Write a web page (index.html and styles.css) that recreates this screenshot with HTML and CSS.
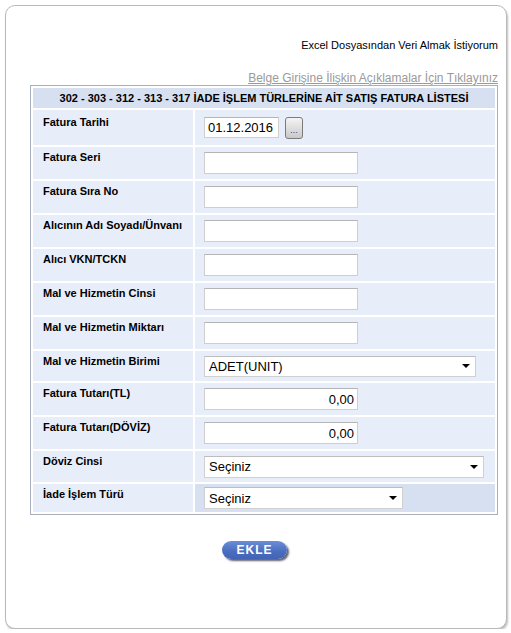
FILE: index.html
```html
<!DOCTYPE html>
<html lang="tr">
<head>
<meta charset="utf-8">
<title>İade Satış Fatura Listesi</title>
<link rel="stylesheet" href="styles.css">
</head>
<body>
<div class="card">
  <div class="top-links">
    <div class="excel">Excel Dosyasından Veri Almak İstiyorum</div>
    <a class="help" href="#">Belge Girişine İlişkin Açıklamalar İçin Tıklayınız</a>
  </div>
  <div class="table-wrap">
    <table class="form-table">
      <colgroup><col class="c-lbl"><col class="c-val"></colgroup>
      <tr class="head"><th colspan="2">302 - 303 - 312 - 313 - 317 İADE İŞLEM TÜRLERİNE AİT SATIŞ FATURA LİSTESİ</th></tr>
      <tr class="h35"><td class="lbl first">Fatura Tarihi</td><td class="val"><div class="date-row"><input class="inp date" type="text" value="01.12.2016"><button class="dots" type="button">...</button></div></td></tr>
      <tr class="h32"><td class="lbl">Fatura Seri</td><td class="val"><input class="inp txt" type="text"></td></tr>
      <tr class="h32"><td class="lbl">Fatura Sıra No</td><td class="val"><input class="inp txt" type="text"></td></tr>
      <tr class="h32"><td class="lbl">Alıcının Adı Soyadı/Ünvanı</td><td class="val"><input class="inp txt" type="text"></td></tr>
      <tr class="h32"><td class="lbl">Alıcı VKN/TCKN</td><td class="val"><input class="inp txt" type="text"></td></tr>
      <tr class="h32"><td class="lbl">Mal ve Hizmetin Cinsi</td><td class="val"><input class="inp txt" type="text"></td></tr>
      <tr class="h32"><td class="lbl">Mal ve Hizmetin Miktarı</td><td class="val"><input class="inp txt" type="text"></td></tr>
      <tr class="h30"><td class="lbl">Mal ve Hizmetin Birimi</td><td class="val"><div class="sel w272"><span>ADET(UNIT)</span><i class="arrow"></i></div></td></tr>
      <tr class="h32"><td class="lbl">Fatura Tutarı(TL)</td><td class="val"><input class="inp txt num" type="text" value="0,00"></td></tr>
      <tr class="h32"><td class="lbl">Fatura Tutarı(DÖVİZ)</td><td class="val"><input class="inp txt num" type="text" value="0,00"></td></tr>
      <tr class="h31"><td class="lbl">Döviz Cinsi</td><td class="val"><div class="sel w280"><span>Seçiniz</span><i class="arrow"></i></div></td></tr>
      <tr class="h28"><td class="lbl">İade İşlem Türü</td><td class="val dark"><div class="sel w199"><span>Seçiniz</span><i class="arrow"></i></div></td></tr>
    </table>
  </div>
  <div class="actions">
    <button class="ekle" type="button">EKLE</button>
  </div>
</div>
</body>
</html>
```

FILE: styles.css
```css
html, body {
  margin: 0;
  padding: 0;
  background: #ffffff;
}
body {
  font-family: "Liberation Sans", Arial, sans-serif;
  color: #000;
}
.card {
  margin: 5px 0 0 5px;
  width: 500px;
  height: 622px;
  border: 1px solid #b9b9b9;
  border-radius: 10px;
  box-shadow: 1px 2px 2px rgba(0, 0, 0, 0.25);
  background: #fff;
  box-sizing: content-box;
}
.top-links {
  padding: 32px 8px 0 8px;
  display: flex;
  flex-direction: column;
  align-items: flex-end;
}
.excel {
  font-size: 11px;
  line-height: 14px;
  height: 14px;
}
.help {
  margin-top: 19px;
  font-size: 12px;
  line-height: 15px;
  color: #9a9a9a;
  text-decoration: underline;
}
.table-wrap {
  padding: 0 8px 0 24px;
  margin-top: -1px;
}
.form-table {
  width: 468px;
  border: 1px solid #a7afbf;
  border-collapse: separate;
  border-spacing: 2px;
  background: #fff;
  table-layout: fixed;
}
.c-lbl { width: 160px; }
.c-val { width: 300px; }
.form-table th {
  height: 20px;
  padding: 0;
  background: #d6e0f0;
  font-size: 11px;
  font-weight: bold;
  text-align: center;
  vertical-align: middle;
}
.form-table td {
  padding: 0;
  background: #e8eef9;
}
.form-table td.lbl {
  padding: 4px 0 0 10px;
  vertical-align: top;
  font-size: 11px;
  line-height: 13px;
  font-weight: bold;
}
.form-table td.lbl.first {
  padding-top: 6px;
}
.form-table td.val {
  padding-left: 9px;
  vertical-align: middle;
}
.form-table td.dark {
  background: #d6e0f0;
}
tr.h35 { height: 35px; }
tr.h32 { height: 32px; }
tr.h31 { height: 31px; }
tr.h30 { height: 30px; }
tr.h28 { height: 28px; }

.date-row {
  display: flex;
  align-items: center;
  gap: 6px;
}
.inp {
  display: block;
  box-sizing: border-box;
  height: 22px;
  margin: 0;
  padding: 0 3px;
  border: 1px solid #cfcfcf;
  border-top-color: #b5b5b5;
  background: #fff;
  font-family: "Liberation Sans", Arial, sans-serif;
  font-size: 13px;
  color: #000;
  outline: none;
}
.inp.date {
  width: 75px;
  height: 21px;
}
.inp.txt {
  width: 154px;
}
.inp.num {
  text-align: right;
}
.dots {
  width: 18px;
  height: 22px;
  padding: 0 0 3px 0;
  margin: 0;
  border: 1px solid #7b7b7b;
  border-radius: 3px;
  background: linear-gradient(#f4f4f4, #c9c9c9);
  font-family: "Liberation Sans", Arial, sans-serif;
  font-size: 9px;
  line-height: 10px;
  color: #444;
  display: flex;
  align-items: flex-end;
  justify-content: center;
}
.sel {
  box-sizing: border-box;
  height: 22px;
  border: 1px solid #d0d0d0;
  border-top-color: #bdbdbd;
  background: #fff;
  display: flex;
  align-items: center;
  justify-content: space-between;
  padding: 0 5px 0 4px;
  font-size: 13px;
}
.w272 { width: 272px; height: 21px; }
.w280 { width: 280px; }
.w199 { width: 199px; }
.arrow {
  width: 0;
  height: 0;
  border-left: 4px solid transparent;
  border-right: 4px solid transparent;
  border-top: 4px solid #000;
}
.actions {
  display: flex;
  justify-content: center;
  padding-top: 26px;
  padding-right: 3px;
}
.ekle {
  width: 65px;
  height: 18px;
  padding: 0;
  border: none;
  border-radius: 9px;
  background: linear-gradient(#6a8ed6, #4a6cbf 60%, #4264b6);
  box-shadow: 2px 2px 2px rgba(30, 30, 50, 0.7);
  color: #fff;
  font-family: "Liberation Sans", Arial, sans-serif;
  font-size: 12px;
  font-weight: bold;
  letter-spacing: 1px;
  line-height: 18px;
}
```
